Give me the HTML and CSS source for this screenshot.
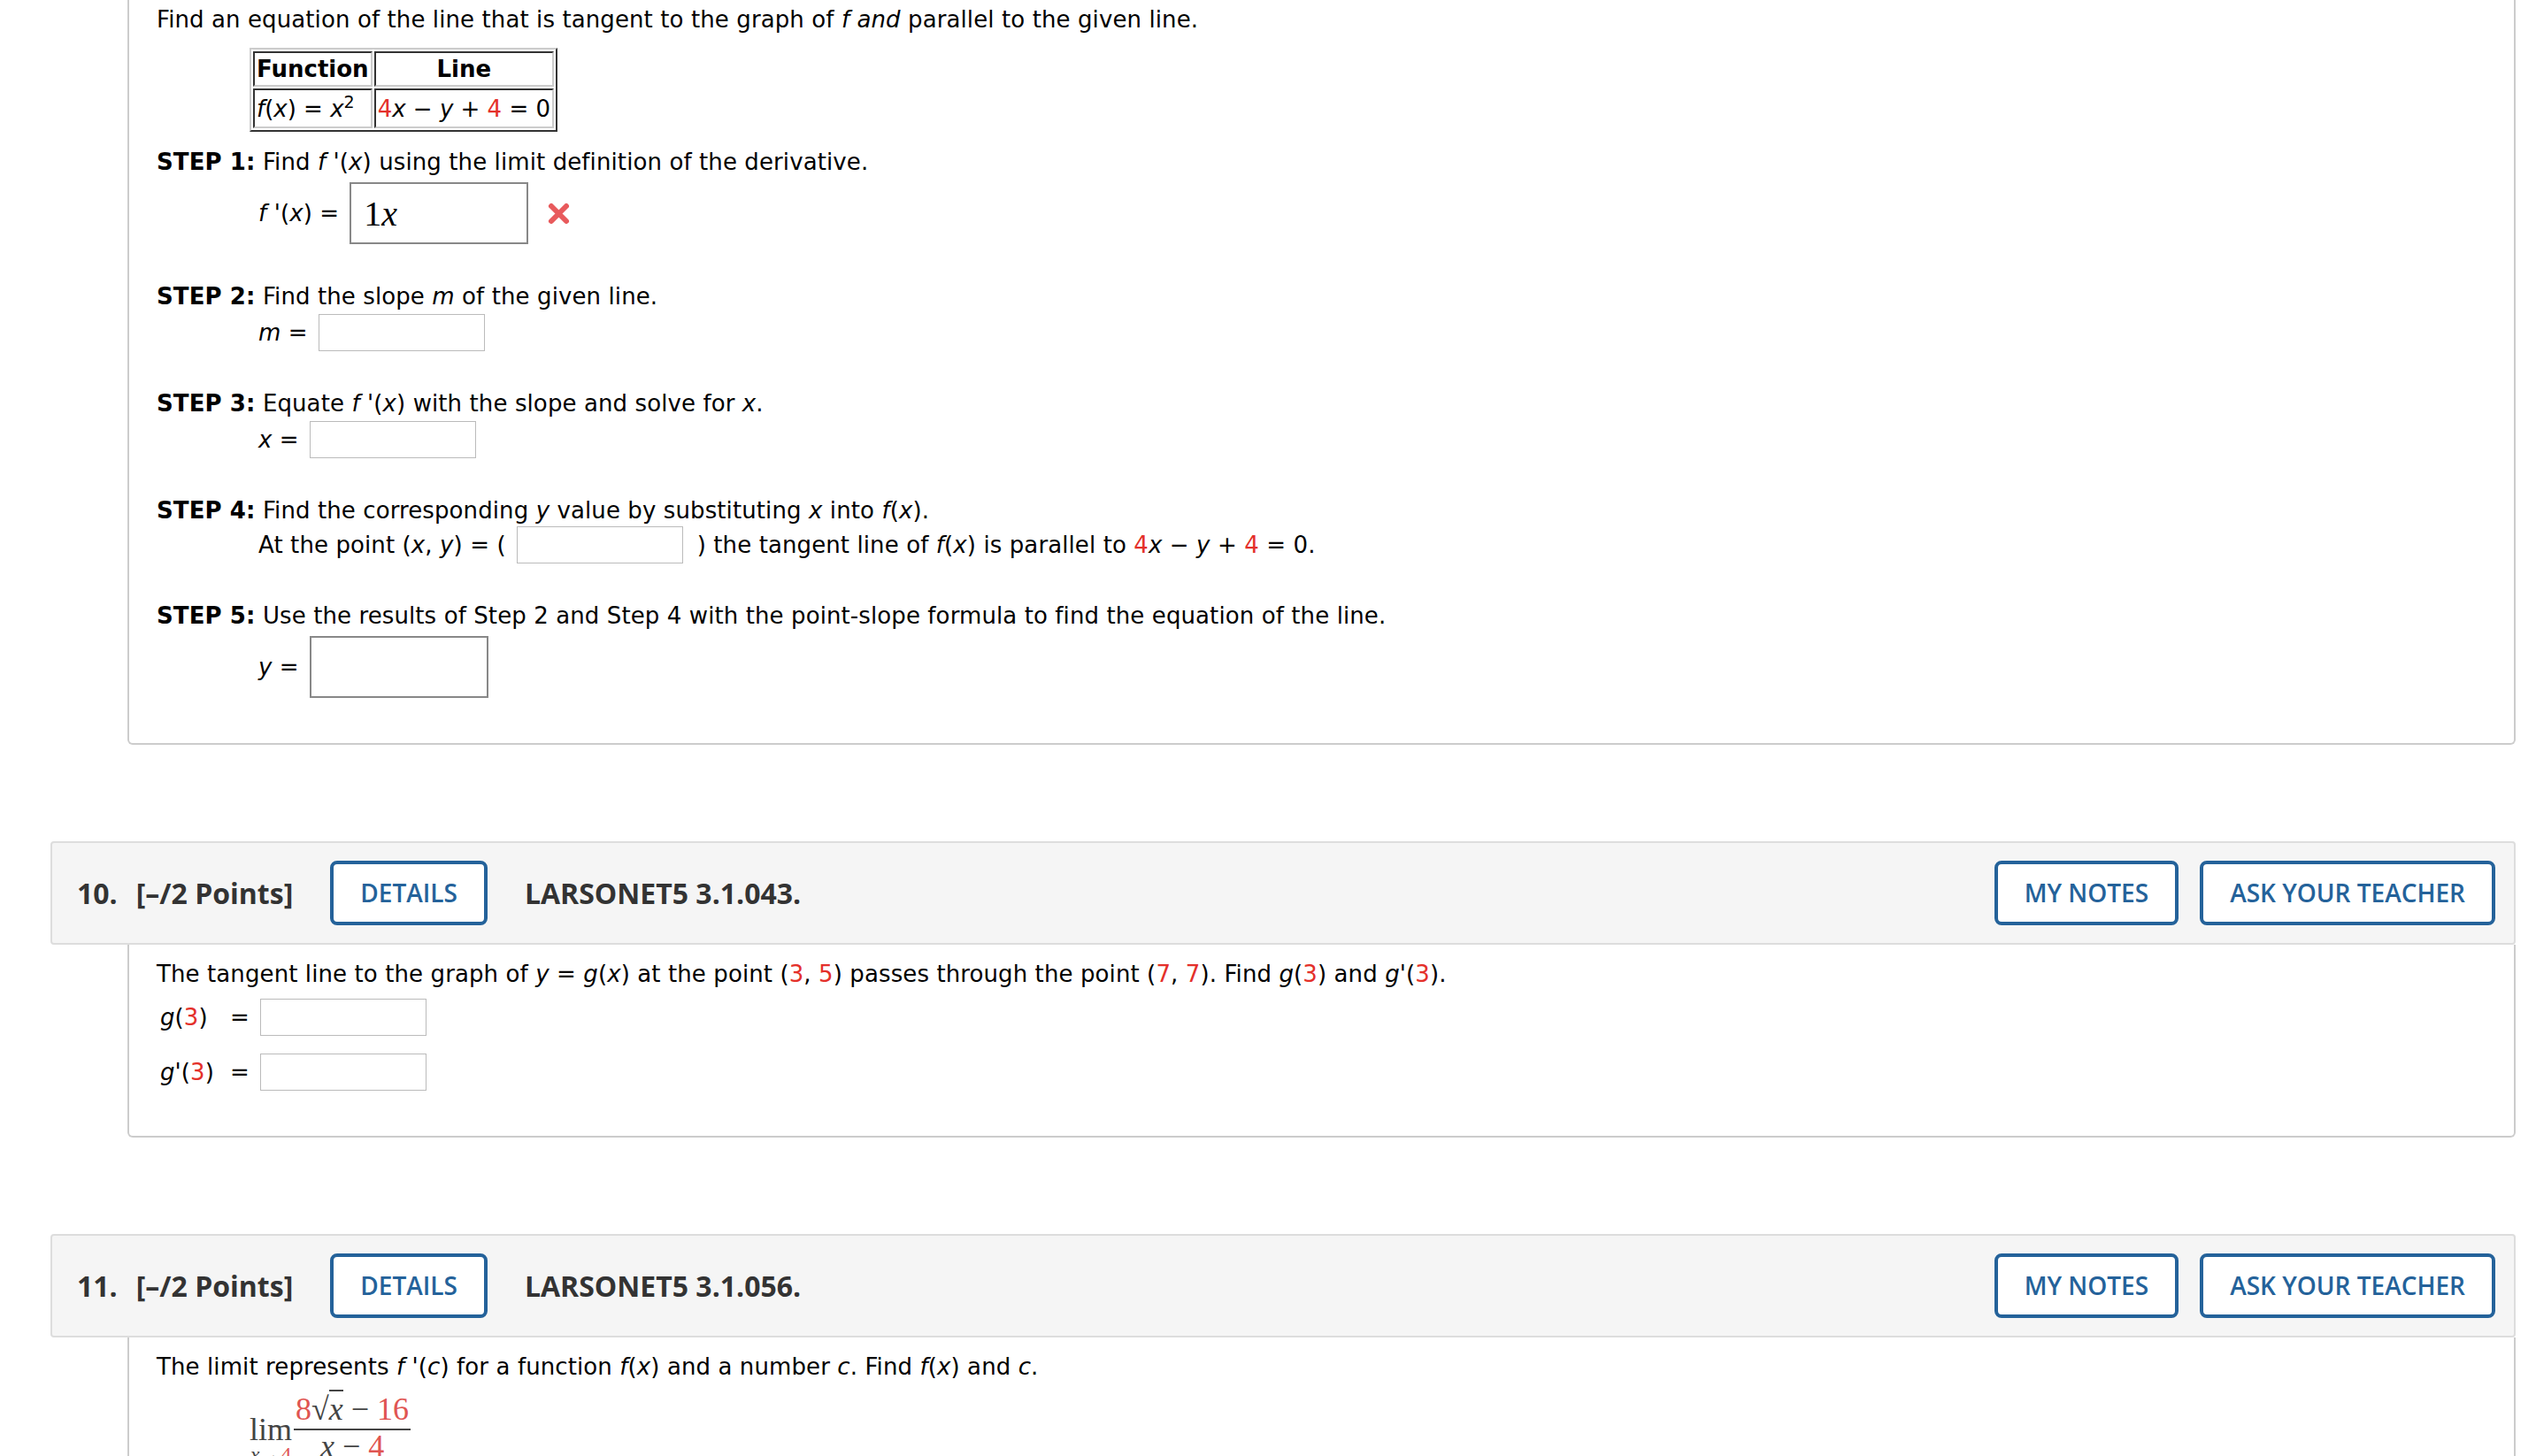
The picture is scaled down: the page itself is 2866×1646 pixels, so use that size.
FILE: index.html
```html
<!DOCTYPE html>
<html lang="en">

<head>
    <meta charset="UTF-8">
    <meta name="viewport" content="width=device-width, initial-scale=1.0">
    <title>Assignment - Derivatives</title>
    <link rel="stylesheet" href="styles.css">
</head>

<body>
    <div class="assignment">

        <!-- Question 9 (top cut off) -->
        <div class="qBody">
            <p class="prompt">Find an equation of the line that is tangent to the graph of <i>f and</i> parallel to the given line.</p>

            <table class="givens">
                <tr>
                    <th class="left">Function</th>
                    <th>Line</th>
                </tr>
                <tr>
                    <td><i>f</i>(<i>x</i>) = <i>x</i><sup>2</sup></td>
                    <td><span class="red">4</span><i>x</i> − <i>y</i> + <span class="red">4</span> = 0</td>
                </tr>
            </table>

            <div class="step">
                <p><b>STEP 1:</b> Find <i>f</i> '(<i>x</i>) using the limit definition of the derivative.</p>
                <div class="answerRow big">
                    <span><i>f</i> '(<i>x</i>) =</span>
                    <span class="mathBox"><span>1</span><i>x</i></span>
                    <svg class="wrong" width="27" height="27" viewBox="0 0 27 27">
                        <path d="M5 5 L22 22 M22 5 L5 22" stroke="#e85a5c" stroke-width="6" stroke-linecap="round" />
                    </svg>
                </div>
            </div>

            <div class="step">
                <p><b>STEP 2:</b> Find the slope <i>m</i> of the given line.</p>
                <div class="answerRow">
                    <span><i>m</i> =</span>
                    <span class="blank"></span>
                </div>
            </div>

            <div class="step">
                <p><b>STEP 3:</b> Equate <i>f</i> '(<i>x</i>) with the slope and solve for <i>x</i>.</p>
                <div class="answerRow">
                    <span><i>x</i> =</span>
                    <span class="blank"></span>
                </div>
            </div>

            <div class="step">
                <p><b>STEP 4:</b> Find the corresponding <i>y</i> value by substituting <i>x</i> into <i>f</i>(<i>x</i>).</p>
                <div class="answerRow tight">
                    <span>At the point (<i>x</i>, <i>y</i>) = (</span>
                    <span class="blank inline"></span>
                    <span>) the tangent line of <i>f</i>(<i>x</i>) is parallel to <span class="red">4</span><i>x</i> − <i>y</i> + <span class="red">4</span> = 0.</span>
                </div>
            </div>

            <div class="step">
                <p><b>STEP 5:</b> Use the results of Step 2 and Step 4 with the point-slope formula to find the equation of the line.</p>
                <div class="answerRow big">
                    <span><i>y</i> =</span>
                    <span class="mathBox"></span>
                </div>
            </div>
        </div>

        <!-- Question 10 -->
        <div class="question">
            <div class="qHeader">
                <span class="qNum">10.</span>
                <span class="qPoints">[–/2 Points]</span>
                <button class="btn">DETAILS</button>
                <span class="qRef">LARSONET5 3.1.043.</span>
                <div class="qActions">
                    <button class="btn">MY NOTES</button>
                    <button class="btn">ASK YOUR TEACHER</button>
                </div>
            </div>
            <div class="qBody">
                <p class="prompt">The tangent line to the graph of <i>y</i> = <i>g</i>(<i>x</i>) at the point (<span class="red">3</span>, <span class="red">5</span>) passes through the point (<span class="red">7</span>, <span class="red">7</span>). Find <i>g</i>(<span class="red">3</span>) and <i>g'</i>(<span class="red">3</span>).</p>
                <div class="fillRow">
                    <span class="fillLabel"><i>g</i>(<span class="red">3</span>)</span>
                    <span>=</span>
                    <span class="blank"></span>
                </div>
                <div class="fillRow">
                    <span class="fillLabel"><i>g'</i>(<span class="red">3</span>)</span>
                    <span>=</span>
                    <span class="blank"></span>
                </div>
            </div>
        </div>

        <!-- Question 11 -->
        <div class="question">
            <div class="qHeader">
                <span class="qNum">11.</span>
                <span class="qPoints">[–/2 Points]</span>
                <button class="btn">DETAILS</button>
                <span class="qRef">LARSONET5 3.1.056.</span>
                <div class="qActions">
                    <button class="btn">MY NOTES</button>
                    <button class="btn">ASK YOUR TEACHER</button>
                </div>
            </div>
            <div class="qBody">
                <p class="prompt">The limit represents <i>f</i> '(<i>c</i>) for a function <i>f</i>(<i>x</i>) and a number <i>c</i>. Find <i>f</i>(<i>x</i>) and <i>c</i>.</p>
                <div class="limit">
                    <span class="lim">lim<span class="limSub"><i>x</i>→<span class="red">4</span></span></span>
                    <span class="frac">
                        <span class="num"><span class="red">8</span><span class="sqrt">√<i>x</i></span><span class="op">−</span><span class="red">16</span></span>
                        <span class="den"><i>x</i><span class="op">−</span><span class="red">4</span></span>
                    </span>
                </div>
            </div>
        </div>

    </div>
</body>

</html>
```

FILE: styles.css
```css
body {
    margin: 0;
    background-color: #fff;
    color: #000;
    font-family: "DejaVu Sans", Verdana, sans-serif;
    font-size: 26px;
    letter-spacing: 0.1px;
    overflow: hidden;
}

.assignment {
    width: 2786px;
    margin-left: 57px;
}

p {
    margin: 0;
    line-height: 32px;
}

.red {
    color: #e4302a;
}

/* Corpo da questão */
.qBody {
    margin-left: 87px;
    border: 2px solid #ccc;
    border-top: none;
    border-radius: 0 0 6px 6px;
    padding: 6px 30px 51px 31px;
}

.question {
    margin-top: 109px;
}

.question .qBody {
    padding-top: 17px;
}

/* Tabela da função / reta */
.givens {
    margin: 16px 0 18px 105px;
    border-collapse: separate;
    border-spacing: 2px;
    border: 2px solid;
    border-color: #ccc #333 #333 #ccc;
    letter-spacing: 0;
}

.givens th,
.givens td {
    border: 2px solid;
    border-color: #333 #ccc #ccc #333;
    padding: 3px 2px;
    line-height: 30px;
    white-space: nowrap;
}

.givens td {
    padding: 6px 2px 5px;
}

.givens th.left {
    text-align: left;
}

.givens sup {
    font-size: 19px;
    line-height: 0;
    vertical-align: 10px;
}

/* Passos */
.step {
    margin-bottom: 43px;
}

.step:last-child {
    margin-bottom: 0;
}

.answerRow {
    display: flex;
    align-items: center;
    gap: 12px;
    margin: 4px 0 0 115px;
}

.answerRow.big {
    margin-top: 7px;
}

.answerRow.tight {
    margin-top: 2px;
}

.blank {
    display: inline-block;
    width: 186px;
    height: 40px;
    border: 1px solid #bbb;
    background-color: #fff;
}

.blank.inline {
    margin-right: 4px;
}

.mathBox {
    display: inline-flex;
    align-items: center;
    box-sizing: border-box;
    width: 202px;
    height: 70px;
    border: 2px solid #888;
    padding-left: 14px;
    font-family: "Liberation Serif", "Times New Roman", serif;
    font-size: 40px;
    letter-spacing: 0;
}

.wrong {
    margin-left: 9px;
}

/* Cabeçalho da questão */
.qHeader {
    display: flex;
    align-items: center;
    background-color: #f5f5f5;
    border: 2px solid #ddd;
    border-radius: 4px;
    padding: 20px 21px 20px 28px;
    font-family: "Open Sans", sans-serif;
    font-weight: 700;
    font-size: 32px;
    letter-spacing: 0;
    color: #333;
}

.qNum {
    margin-right: 21px;
}

.qPoints {
    margin-right: 42px;
}

.qRef {
    flex: 1;
    margin-left: 42px;
}

.qActions {
    display: flex;
    gap: 24px;
}

.btn {
    font-family: "Open Sans", sans-serif;
    font-weight: 600;
    font-size: 28px;
    line-height: 37px;
    color: #24629a;
    background-color: #fff;
    border: 4px solid #24629a;
    border-radius: 8px;
    padding: 14px 30px;
    cursor: pointer;
}

/* Linhas g(3) = */
.fillRow {
    display: flex;
    align-items: center;
    margin: 12px 0 0 4px;
}

.fillRow + .fillRow {
    margin-top: 20px;
}

.fillRow .fillLabel {
    width: 79px;
}

.fillRow .blank {
    margin-left: 12px;
}

/* Limite */
.limit {
    display: flex;
    align-items: flex-start;
    margin: 12px 0 0 105px;
    font-family: "Liberation Serif", "Times New Roman", serif;
    font-size: 36px;
    letter-spacing: 0;
    color: #444;
}

.limit .red {
    color: #e05552;
}

.lim {
    display: inline-flex;
    flex-direction: column;
    align-items: center;
    padding-top: 26px;
    line-height: 34px;
}

.limSub {
    font-size: 24px;
    line-height: 22px;
}

.frac {
    display: inline-flex;
    flex-direction: column;
    align-items: center;
    margin-left: 2px;
}

.num {
    padding: 0 2px 2px;
    line-height: 40px;
}

.den {
    border-top: 2px solid #444;
    width: 100%;
    text-align: center;
    line-height: 36px;
}

.op {
    margin: 0 9px;
}

.sqrt i {
    border-top: 2px solid #444;
}
```
